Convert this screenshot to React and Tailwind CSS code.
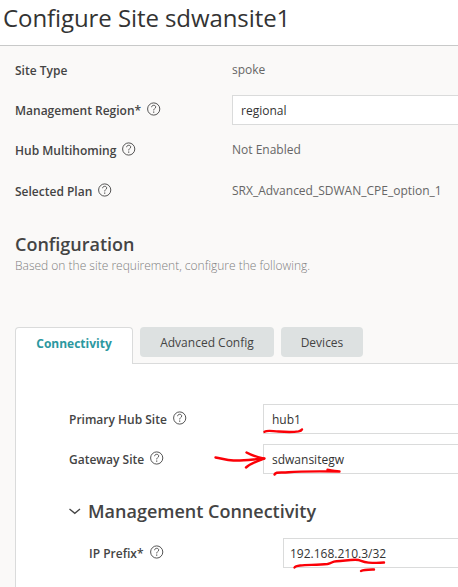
function Help({ className = '' }) {
  return (
    <svg width="14" height="14" viewBox="0 0 14 14" fill="none" stroke="#4c4c4c" className={'shrink-0 ' + className}>
      <circle cx="6.700" cy="7" r="6.100" strokeWidth="0.95" />
      <path d="M4.600 5.2C4.700 3.9 5.600 3.3 6.700 3.300c1.200 0 2 .7 2 1.700 0 1.500-2 1.600-2 3.400" strokeWidth="0.95" />
      <path d="M6.700 9.600v1.200" strokeWidth="1.100" />
    </svg>
  );
}

function Row({ label, labelWidth, help, children }) {
  return (
    <div className="flex h-[30px] items-center">
      <div className={'flex shrink-0 items-center gap-1.5 text-[12px] font-semibold text-[#444] ' + labelWidth}>
        <span className="relative top-px whitespace-nowrap">{label}</span>
        {help && <Help className="relative -top-px" />}
      </div>
      {children}
    </div>
  );
}

function Field({ value, className = 'pl-2' }) {
  return (
    <div className={'flex h-[30px] flex-1 items-center border border-r-0 border-[#dadbdb] bg-white pt-px text-[12px] text-[#333] ' + className}>
      <span className="whitespace-nowrap">{value}</span>
    </div>
  );
}

function Value({ children }) {
  return <span className="whitespace-nowrap text-[12px] text-[#666]">{children}</span>;
}

function Markup() {
  return (
    <svg width="458" height="587" viewBox="0 0 458 587" fill="none" stroke="#fb0007" strokeWidth="2.400" strokeLinecap="round" strokeLinejoin="round" className="pointer-events-none absolute left-0 top-0">
      <path d="M264.500 431.800c3-2 8-.5 14-.3 8 .6 15 .6 20-.1 2-.4 3-1 3.500-2" />
      <path d="M215.500 457.500c6 .8 10 2.500 18 3 11 .5 21-1.500 31-2" />
      <path d="M246.500 452.500c5 3 11 4.500 17.500 6.200-6 2.300-13 4.300-18 8.800" />
      <path d="M274.500 474.500c1-3 6-1.500 14-2.300 14-1.200 29-1 51-.7-4-.2-8-1-12-1.800" />
      <path d="M294.500 567.500c2-3.500 18-2 33-3.500 5-1 4-2.500 9-2.800 9-.5 16-2 22-1.200 3 .7 4 2.300 10 2.600 5 .3 10 .4 15.500-.1" />
      <path d="M361 571c3-1.500 8-1.400 13-1.500" />
    </svg>
  );
}

export default function App() {
  return (
    <div className="relative flex h-[587px] w-[458px] flex-col overflow-hidden bg-[#faf9f8] font-['Open_Sans','Noto_Sans',sans-serif]">
      <header className="h-[46px] shrink-0 border-b border-[#c8c9c9] bg-white pl-[3px] pt-px">
        <h1 className="whitespace-nowrap text-[24px] leading-[33px] tracking-[-0.08px] text-[#333]">Configure Site sdwansite1</h1>
      </header>
      <main className="flex flex-1 flex-col pl-[15px] pt-[9px]">
        <section className="flex flex-col gap-2.5">
          <Row label="Site Type" labelWidth="w-[217px]"><Value>spoke</Value></Row>
          <Row label="Management Region*" labelWidth="w-[217px]" help><Field value="regional" /></Row>
          <Row label="Hub Multihoming" labelWidth="w-[217px]" help><Value>Not Enabled</Value></Row>
          <div className="pt-px">
            <Row label="Selected Plan" labelWidth="w-[217px]" help><Value>SRX_Advanced_SDWAN_CPE_option_1</Value></Row>
          </div>
        </section>
        <h2 className="mt-[26px] text-[18px] font-semibold leading-6 text-[#444]">Configuration</h2>
        <p className="whitespace-nowrap text-[12px] font-light leading-5 text-[#808080]">Based on the site requirement, configure the following.</p>
        <nav className="mt-[51px] flex h-[36px] shrink-0 items-start gap-[7px] text-[12px]">
          <button className="z-10 h-[37px] w-[118px] shrink-0 rounded-t-sm border border-b-0 border-[#dadbdb] bg-white pb-1 font-bold text-[#2c98a0]">Connectivity</button>
          <button className="h-[30px] w-[134px] shrink-0 rounded-sm bg-[#dde1e1] pt-px text-[#444]">Advanced Config</button>
          <button className="h-[30px] w-[82px] shrink-0 rounded-sm bg-[#dde1e1] pt-px text-[#444]">Devices</button>
        </nav>
        <section className="flex flex-1 flex-col border-l border-t border-[#dadbdb] bg-white pl-[53px] pt-10">
          <div className="flex flex-col gap-2.5">
            <Row label="Primary Hub Site" labelWidth="w-[194px]" help><Field value="hub1" /></Row>
            <Row label="Gateway Site" labelWidth="w-[194px]" help><Field value="sdwansitegw" /></Row>
          </div>
          <div className="mt-[25px] flex h-6 items-center">
            <svg width="12" height="7" viewBox="0 0 12 7" fill="none" stroke="#444" strokeWidth="1.300"><path d="M.5 1 5.800 5.300 11 1" /></svg>
            <h3 className="ml-[7px] whitespace-nowrap text-[18px] font-semibold text-[#444]">Management Connectivity</h3>
          </div>
          <div className="mt-[15px] pl-5">
            <Row label="IP Prefix*" labelWidth="w-[194px]" help><Field value="192.168.210.3/32" className="pl-1.5" /></Row>
          </div>
        </section>
      </main>
      <Markup />
    </div>
  );
}
